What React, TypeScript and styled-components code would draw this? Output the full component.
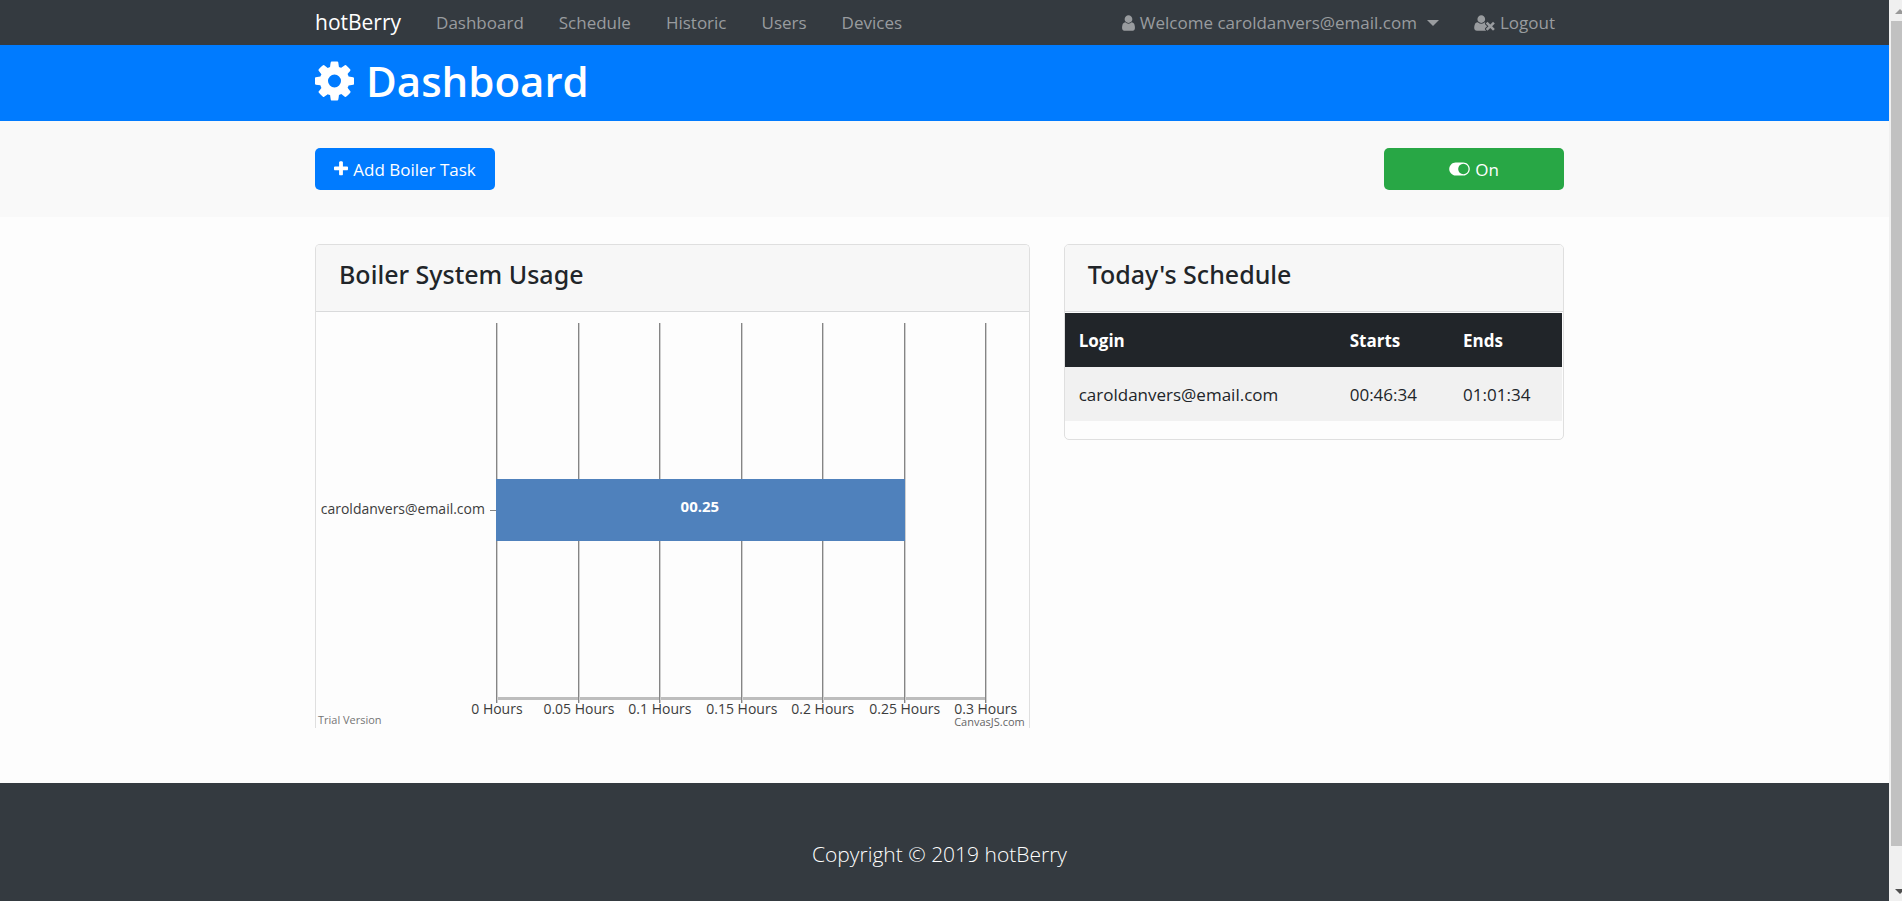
import React from "react";
import styled, { createGlobalStyle } from "styled-components";

const GlobalStyle = createGlobalStyle`
  *, *::before, *::after { box-sizing: border-box; }
  body {
    margin: 0;
    background: #fdfdfd;
    color: #212529;
    font-family: "Open Sans", "Noto Sans", sans-serif;
    font-size: 17px;
    line-height: 27px;
  }
  h1, h2, p { margin: 0; }
`;

const Shell = styled.div`
  display: flex;
  min-height: 100vh;
`;

const Page = styled.div`
  flex: 1;
  min-width: 0;
  display: flex;
  flex-direction: column;
  & > * { padding-right: 10px; }
`;

const Container = styled.div`
  width: 100%;
  max-width: 1249px;
  margin: 0 auto;
`;

const NavBar = styled.nav`
  background: #343a40;
`;

const NavRow = styled(Container)`
  display: flex;
  align-items: center;
  height: 45px;
`;

const Brand = styled.a`
  color: #fff;
  font-size: 21px;
  text-decoration: none;
  margin-right: 35px;
`;

const NavList = styled.ul`
  display: flex;
  gap: 35px;
  list-style: none;
  margin: 0;
  padding: 0;
`;

const AccountList = styled(NavList)`
  margin-left: auto;
  padding-right: 9px;
`;

const NavLink = styled.a`
  display: flex;
  align-items: center;
  gap: 5px;
  color: #999c9f;
  text-decoration: none;
`;

const Caret = styled.span`
  margin-left: 5px;
  border: 6px solid transparent;
  border-top-color: currentColor;
  border-bottom: 0;
`;

const Header = styled.header`
  background: #007bff;
  color: #fff;
`;

const Title = styled.h1`
  display: flex;
  align-items: center;
  gap: 12px;
  height: 76px;
  padding-bottom: 5px;
  font-size: 42px;
  line-height: 54px;
  font-weight: 600;
`;

const Actions = styled.section`
  background: #f9f9f9;
`;

const ActionRow = styled(Container)`
  display: flex;
  justify-content: space-between;
  padding: 27px 0;
`;

const Button = styled.button<{ $color: string }>`
  display: flex;
  align-items: center;
  justify-content: center;
  gap: 5px;
  width: 180px;
  height: 42px;
  border: 0;
  border-radius: 5px;
  background: ${(p) => p.$color};
  color: #fff;
  font: inherit;
`;

const Main = styled.main`
  padding-top: 27px;
  padding-bottom: 55px;
`;

const Columns = styled(Container)`
  display: grid;
  grid-template-columns: 10fr 7fr;
  gap: 34px;
  align-items: start;
`;

const Card = styled.section<{ $open?: boolean }>`
  border: 1px solid #dfdfdf;
  border-radius: 5px;
  overflow: hidden;
  ${(p) => p.$open && "border-bottom: 0; border-bottom-left-radius: 0; border-bottom-right-radius: 0;"}
`;

const CardTitle = styled.h2`
  height: 67px;
  padding: 13px 23px;
  background: #f7f7f7;
  border-bottom: 1px solid #d9dadb;
  font-family: "Noto Sans", "Open Sans", sans-serif;
  font-size: 25px;
  line-height: 32px;
  font-weight: 500;
`;

const ChartSvg = styled.svg`
  display: block;
  width: 100%;
  font-size: 14px;
  fill: #3c3c3c;
`;

const Table = styled.table`
  width: 100%;
  table-layout: fixed;
  border-collapse: collapse;
  margin: 1px 0 18px;
  border-right: 1px solid #fdfdfd;
  th, td { padding: 0 14px; text-align: left; }
  th { height: 54px; background: #212529; color: #fff; font-weight: 700; }
  td { height: 54px; background: #f1f1f1; }
  th:first-child { width: 271px; }
`;

const Footer = styled.footer`
  flex: 1;
  background: #343a40;
  color: #fff;
  padding-top: 54px;
  text-align: center;
  font-size: 21px;
  line-height: 34px;
  font-weight: 300;
`;

const ScrollTrack = styled.div`
  width: 13px;
  flex: none;
  background: #f0f0f0;
  display: flex;
  flex-direction: column;
  align-items: flex-end;
`;

const ScrollThumb = styled.div`
  flex: 1;
  width: 11px;
  background: #c1c1c1;
`;

const ScrollEnd = styled.svg<{ $size: number }>`
  display: block;
  width: 13px;
  height: ${(p) => p.$size}px;
`;

const icons = {
  cog: { w: 1536, x: 128, d: "M1152 896q0-106-75-181t-181-75-181 75-75 181 75 181 181 75 181-75 75-181zm512-109v222q0 12-8 23t-20 13l-185 28q-19 54-39 91 35 50 107 138 10 12 10 25t-9 23q-27 37-99 108t-94 71q-12 0-26-9l-138-108q-44 23-91 38-16 136-29 186-7 28-36 28h-222q-14 0-24.5-8.5t-11.5-21.5l-28-184q-49-16-90-37l-141 107q-10 9-25 9-14 0-25-11-126-114-165-168-7-10-7-23 0-12 8-23 15-21 51-66.5t54-70.5q-27-50-41-99l-183-27q-13-2-21-12.5t-8-23.5v-222q0-12 8-23t19-13l186-28q14-46 39-92-40-57-107-138-10-12-10-24 0-10 9-23 26-36 98.5-107.5t94.5-71.5q13 0 26 10l138 107q44-23 91-38 16-136 29-186 7-28 36-28h222q14 0 24.5 8.5t11.5 21.5l28 184q49 16 90 37l142-107q9-9 24-9 13 0 25 10 129 119 165 170 7 8 7 22 0 12-8 23-15 21-51 66.5t-54 70.5q26 50 41 98l183 28q13 2 21 12.5t8 23.5z" },
  plus: { w: 1408, x: 192, d: "M1600 736v192q0 40-28 68t-68 28h-416v416q0 40-28 68t-68 28h-192q-40 0-68-28t-28-68v-416h-416q-40 0-68-28t-28-68v-192q0-40 28-68t68-28h416v-416q0-40 28-68t68-28h192q40 0 68 28t28 68v416h416q40 0 68 28t28 68z" },
  user: { w: 1280, x: 256, d: "M1536 1399q0 109-62.5 187t-150.5 78h-854q-88 0-150.5-78t-62.5-187q0-85 8.5-160.5t31.5-152 58.5-131 94-89 134.5-34.5q131 128 313 128t313-128q76 0 134.5 34.5t94 89 58.5 131 31.5 152 8.5 160.5zm-256-887q0 159-112.5 271.5t-271.5 112.5-271.5-112.5-112.5-271.5 112.5-271.5 271.5-112.5 271.5 112.5 112.5 271.5z" },
  userTimes: { w: 2048, x: 0, d: "M704 896q-159 0-271.5-112.5t-112.5-271.5 112.5-271.5 271.5-112.5 271.5 112.5 112.5 271.5-112.5 271.5-271.5 112.5zm1077 320l249 249q9 9 9 23 0 13-9 22l-136 136q-9 9-22 9-14 0-23-9l-249-249-249 249q-9 9-23 9-13 0-22-9l-136-136q-9-9-9-22 0-14 9-23l249-249-249-249q-9-9-9-23 0-13 9-22l136-136q9-9 22-9 14 0 23 9l249 249 249-249q9-9 23-9 13 0 22 9l136 136q9 9 9 22 0 14-9 23zm-498 0l-181 181q-37 37-37 91 0 53 37 90l83 83q-21 3-44 3h-874q-121 0-194-69t-73-190q0-53 3.5-103.5t14-109 26.5-108.5 43-97.5 62-81 85.5-53.5 111.5-20q19 0 39 17 154 122 319 122t319-122q20-17 39-17 28 0 57 6-28 27-41 50t-13 56q0 54 37 91z" },
  toggleOn: { w: 2048, x: 0, d: "M0 896q0-130 51-248.5t136.5-204 204-136.5 248.5-51h768q130 0 248.5 51t204 136.5 136.5 204 51 248.5-51 248.5-136.5 204-204 136.5-248.5 51h-768q-130 0-248.5-51t-204-136.5-136.5-204-51-248.5zm1408 512q104 0 198.5-40.5t163.5-109.5 109.5-163.5 40.5-198.5-40.5-198.5-109.5-163.5-163.5-109.5-198.5-40.5-198.5 40.5-163.5 109.5-109.5 163.5-40.5 198.5 40.5 198.5 109.5 163.5 163.5 109.5 198.5 40.5z" },
};

function Icon({ name, size = 18 }: { name: keyof typeof icons; size?: number }) {
  const { w, x, d } = icons[name];
  return (
    <svg width={Math.round((w * size) / 1792)} height={size} viewBox={`${x} 0 ${w} 1792`} fill="currentColor" aria-hidden="true">
      <path d={d} />
    </svg>
  );
}

const links = ["Dashboard", "Schedule", "Historic", "Users", "Devices"];
const ticks = [
  { x: 181, label: "0 Hours" },
  { x: 263, label: "0.05 Hours" },
  { x: 344, label: "0.1 Hours" },
  { x: 426, label: "0.15 Hours" },
  { x: 507, label: "0.2 Hours" },
  { x: 589, label: "0.25 Hours" },
  { x: 670, label: "0.3 Hours" },
];

function UsageChart() {
  return (
    <ChartSvg viewBox="0 0 713 416" role="img" aria-label="Boiler hours per user">
      <g shapeRendering="crispEdges">
        <rect x="181" y="385" width="490" height="3" fill="#bdbdbd" />
        {ticks.map((t) => (
          <g key={t.label}>
            <rect x={t.x - 1} y="11" width="1" height="380" fill="#858585" />
            <rect x={t.x} y="11" width="1" height="380" fill="#cfcfcf" />
          </g>
        ))}
        <rect x="174" y="198" width="6" height="1" fill="#858585" />
        <rect x="180" y="167" width="409" height="62" fill="#4f81bc" />
      </g>
      {ticks.map((t) => (
        <text key={t.label} x={t.x} y="402" textAnchor="middle">{t.label}</text>
      ))}
      <text x="169" y="202" textAnchor="end">caroldanvers@email.com</text>
      <text x="384" y="200" textAnchor="middle" fill="#fff" fontSize="15" fontWeight="700">00.25</text>
      <text x="2" y="412" fontSize="11" fill="#757575">Trial Version</text>
      <text x="709" y="414" fontSize="11" fill="#656565" textAnchor="end">CanvasJS.com</text>
    </ChartSvg>
  );
}

export default function App() {
  return (
    <>
      <GlobalStyle />
      <Shell>
        <Page>
          <NavBar>
            <NavRow>
              <Brand href="#">hotBerry</Brand>
              <NavList>
                {links.map((l) => (
                  <li key={l}><NavLink href="#">{l}</NavLink></li>
                ))}
              </NavList>
              <AccountList>
                <li>
                  <NavLink href="#"><Icon name="user" />Welcome caroldanvers@email.com<Caret /></NavLink>
                </li>
                <li>
                  <NavLink href="#"><Icon name="userTimes" />Logout</NavLink>
                </li>
              </AccountList>
            </NavRow>
          </NavBar>
          <Header>
            <Container>
              <Title><Icon name="cog" size={46} />Dashboard</Title>
            </Container>
          </Header>
          <Actions>
            <ActionRow>
              <Button $color="#007bff" type="button"><Icon name="plus" />Add Boiler Task</Button>
              <Button $color="#28a745" type="button"><Icon name="toggleOn" />On</Button>
            </ActionRow>
          </Actions>
          <Main>
            <Columns>
              <Card $open>
                <CardTitle>Boiler System Usage</CardTitle>
                <UsageChart />
              </Card>
              <Card>
                <CardTitle>Today's Schedule</CardTitle>
                <Table>
                  <thead>
                    <tr><th scope="col">Login</th><th scope="col">Starts</th><th scope="col">Ends</th></tr>
                  </thead>
                  <tbody>
                    <tr><td>caroldanvers@email.com</td><td>00:46:34</td><td>01:01:34</td></tr>
                  </tbody>
                </Table>
              </Card>
            </Columns>
          </Main>
          <Footer><p>Copyright © 2019 hotBerry</p></Footer>
        </Page>
        <ScrollTrack aria-hidden="true">
          <ScrollEnd $size={21} viewBox="0 0 13 21"><path d="M6 14l5-5 5 5z" fill="#999" /></ScrollEnd>
          <ScrollThumb />
          <ScrollEnd $size={55} viewBox="0 0 13 55"><path d="M6 43l5 5 5-5z" fill="#505050" /></ScrollEnd>
        </ScrollTrack>
      </Shell>
    </>
  );
}
